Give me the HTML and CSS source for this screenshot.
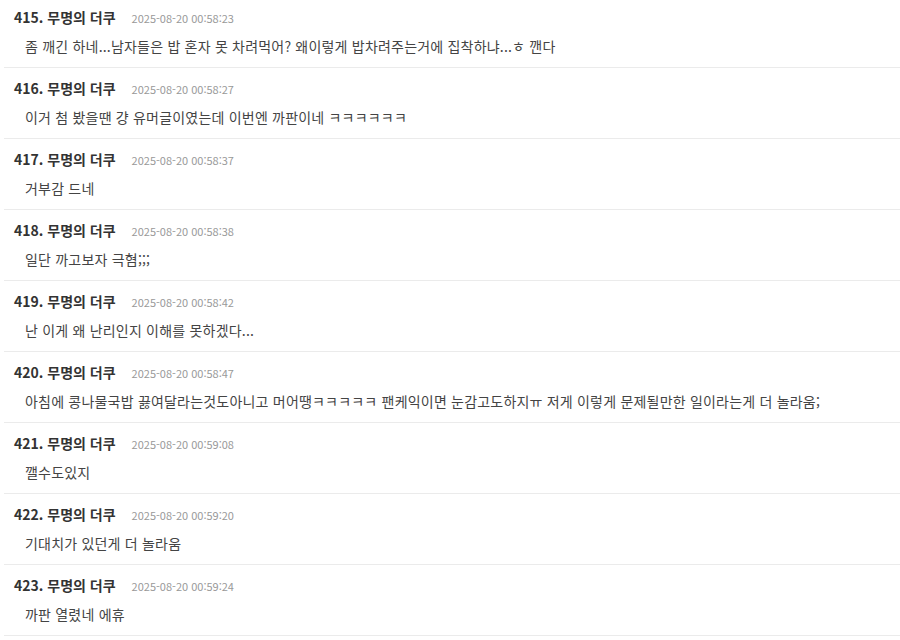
FILE: index.html
```html
<!DOCTYPE html>
<html lang="ko">
<head>
    <meta charset="UTF-8">
    <meta name="viewport" content="width=device-width, initial-scale=1.0">
    <title>댓글</title>
    <link rel="stylesheet" href="styles.css">
</head>
<body>
    <ul class="comments">
        <li class="comment">
            <div class="comment-head"><span class="name">415. 무명의 더쿠</span><span class="date">2025-08-20 00:58:23</span></div>
            <p class="comment-body">좀 깨긴 하네...남자들은 밥 혼자 못 차려먹어? 왜이렇게 밥차려주는거에 집착하냐...ㅎ 깬다</p>
        </li>
        <li class="comment">
            <div class="comment-head"><span class="name">416. 무명의 더쿠</span><span class="date">2025-08-20 00:58:27</span></div>
            <p class="comment-body">이거 첨 봤을땐 걍 유머글이였는데 이번엔 까판이네 ㅋㅋㅋㅋㅋㅋ</p>
        </li>
        <li class="comment">
            <div class="comment-head"><span class="name">417. 무명의 더쿠</span><span class="date">2025-08-20 00:58:37</span></div>
            <p class="comment-body">거부감 드네</p>
        </li>
        <li class="comment">
            <div class="comment-head"><span class="name">418. 무명의 더쿠</span><span class="date">2025-08-20 00:58:38</span></div>
            <p class="comment-body">일단 까고보자 극혐;;;</p>
        </li>
        <li class="comment">
            <div class="comment-head"><span class="name">419. 무명의 더쿠</span><span class="date">2025-08-20 00:58:42</span></div>
            <p class="comment-body">난 이게 왜 난리인지 이해를 못하겠다...</p>
        </li>
        <li class="comment">
            <div class="comment-head"><span class="name">420. 무명의 더쿠</span><span class="date">2025-08-20 00:58:47</span></div>
            <p class="comment-body">아침에 콩나물국밥 끓여달라는것도아니고 머어땡ㅋㅋㅋㅋㅋ 팬케익이면 눈감고도하지ㅠ 저게 이렇게 문제될만한 일이라는게 더 놀라움;</p>
        </li>
        <li class="comment">
            <div class="comment-head"><span class="name">421. 무명의 더쿠</span><span class="date">2025-08-20 00:59:08</span></div>
            <p class="comment-body">깰수도있지</p>
        </li>
        <li class="comment">
            <div class="comment-head"><span class="name">422. 무명의 더쿠</span><span class="date">2025-08-20 00:59:20</span></div>
            <p class="comment-body">기대치가 있던게 더 놀라움</p>
        </li>
        <li class="comment">
            <div class="comment-head"><span class="name">423. 무명의 더쿠</span><span class="date">2025-08-20 00:59:24</span></div>
            <p class="comment-body">까판 열렸네 에휴</p>
        </li>
    </ul>
</body>
</html>
```

FILE: styles.css
```css
body {
    margin: 0;
    background-color: #fff;
    font-family: "Noto Sans CJK KR", "Noto Sans", sans-serif;
    color: #333;
}

.comments {
    list-style: none;
    margin: -3px 0 0;
    padding: 0 0 0 4px;
}

.comment {
    height: 70px;
    padding: 0 10px;
    border-bottom: 1px solid #ebebeb;
}

.comment-head {
    display: flex;
    align-items: baseline;
    height: 20px;
    padding-top: 10px;
    line-height: 20px;
}

.name {
    font-size: 14px;
    font-weight: bold;
    color: #333;
}

.date {
    margin-left: 16px;
    font-size: 11px;
    color: #999;
}

.comment-body {
    margin: 9px 0 0 11px;
    font-size: 14px;
    line-height: 20px;
    letter-spacing: 0.2px;
    color: #444;
}
```
